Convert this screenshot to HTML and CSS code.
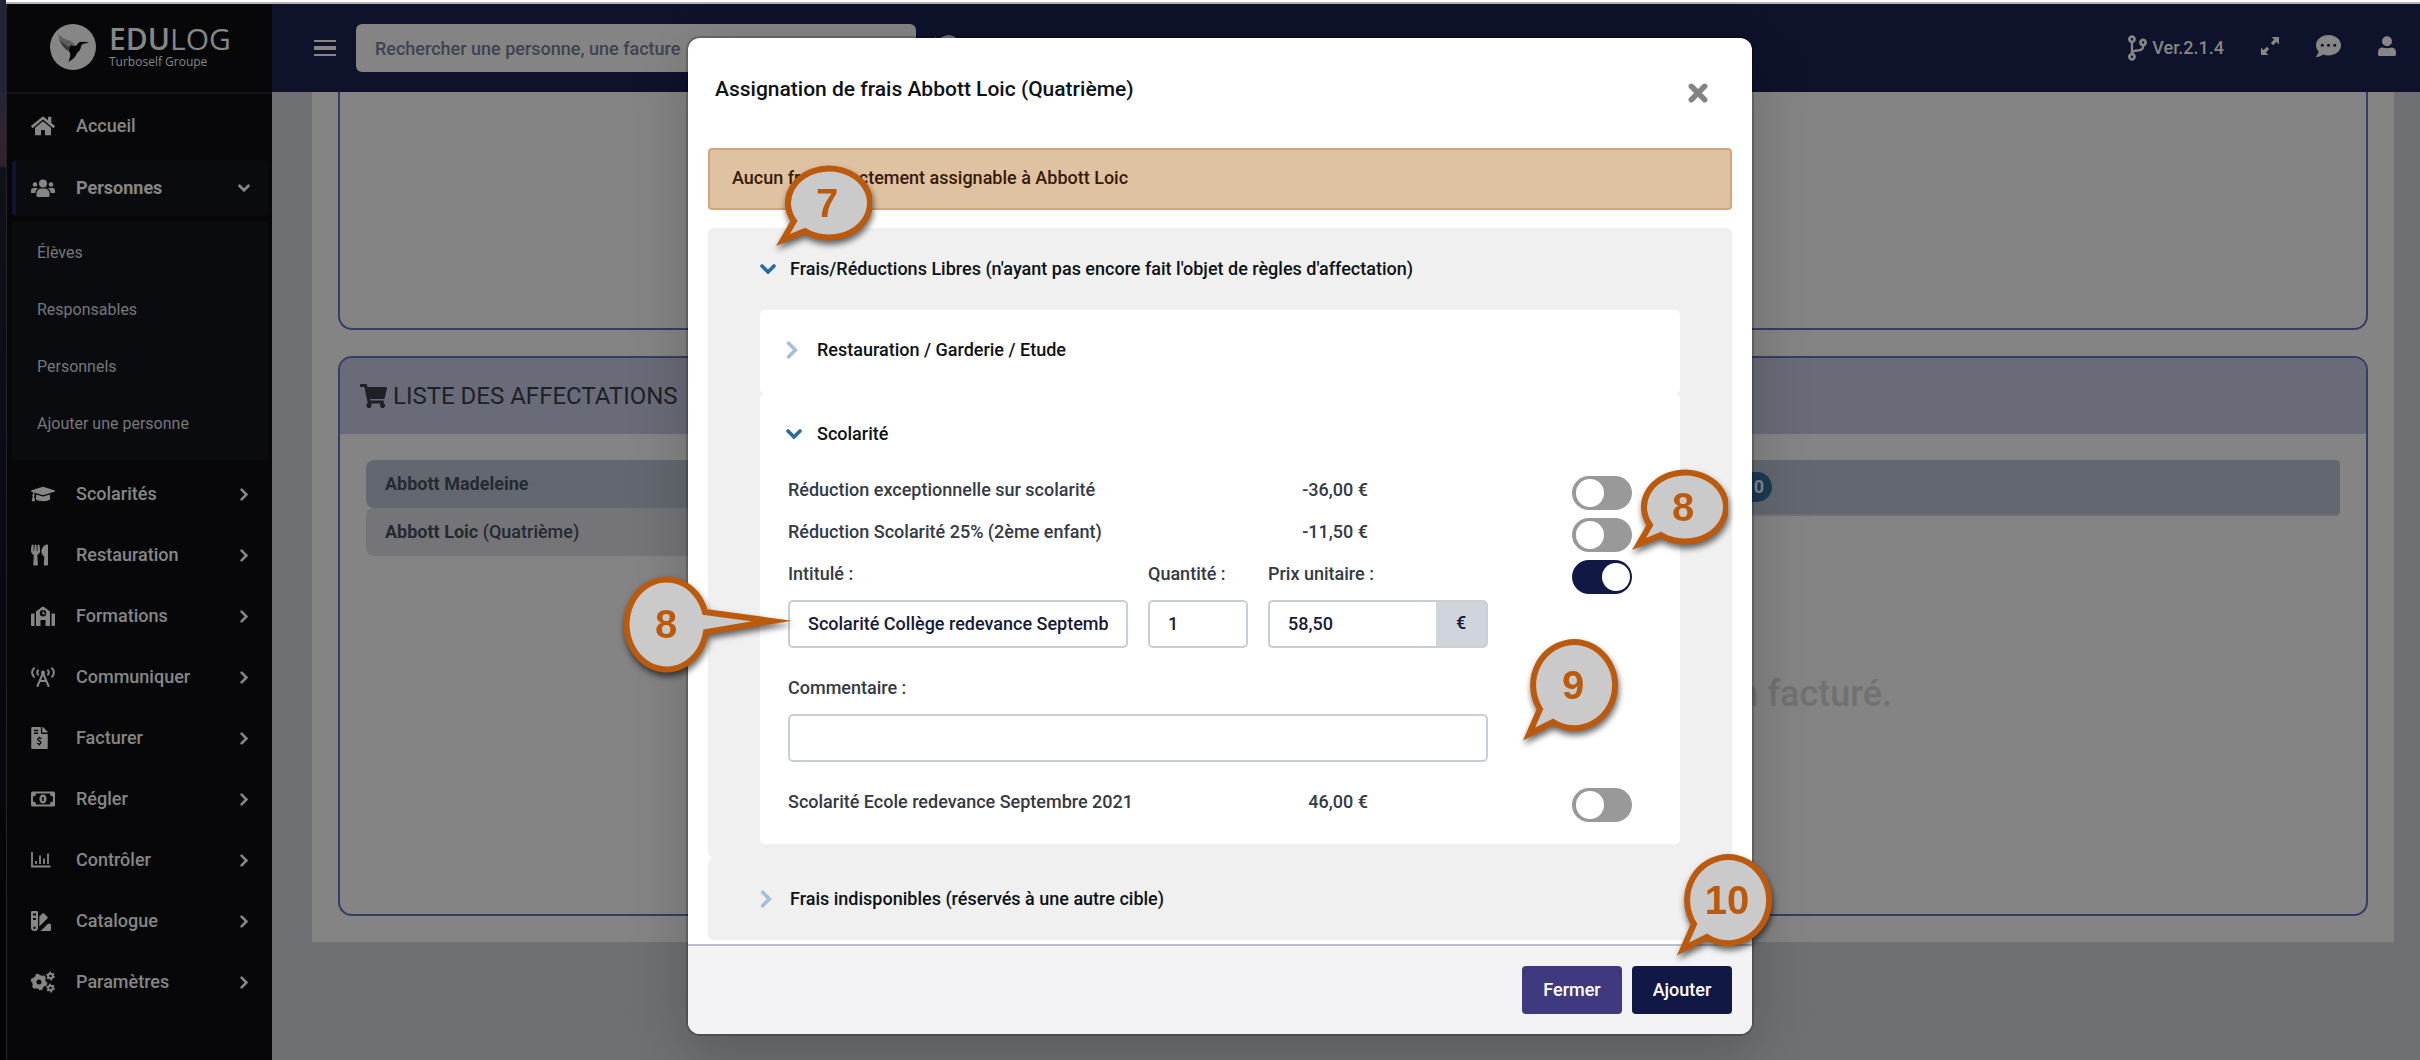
FILE: index.html
```html
<!DOCTYPE html>
<html lang="fr">
<head>
<meta charset="utf-8">
<title>Edulog – Assignation de frais</title>
<link rel="stylesheet" href="styles.css">
</head>
<body>
<svg class="sprite" aria-hidden="true">
  <symbol id="i-home" viewBox="0 0 576 512"><path d="M280.37 148.26L96 300.11V464a16 16 0 0 0 16 16l112.06-.29a16 16 0 0 0 15.92-16V368a16 16 0 0 1 16-16h64a16 16 0 0 1 16 16v95.64a16 16 0 0 0 16 16.05L464 480a16 16 0 0 0 16-16V300L295.67 148.26a12.19 12.19 0 0 0-15.3 0zM571.6 251.47L488 182.56V44.05a12 12 0 0 0-12-12h-56a12 12 0 0 0-12 12v72.61L318.47 43a48 48 0 0 0-61 0L4.34 251.47a12 12 0 0 0-1.6 16.9l25.5 31A12 12 0 0 0 45.15 301l235.22-193.74a12.19 12.19 0 0 1 15.3 0L530.9 301a12 12 0 0 0 16.9-1.6l25.5-31a12 12 0 0 0-1.7-16.93z"/></symbol>
  <symbol id="i-people" viewBox="0 0 24 20"><circle cx="12" cy="5.500" r="4"/><path d="M5.500 18v-2.500a5 5 0 0 1 5-5h3a5 5 0 0 1 5 5V18q0 1-1 1h-11q-1 0-1-1z"/><circle cx="4" cy="6.500" r="2.300"/><circle cx="20" cy="6.500" r="2.300"/><path d="M0 14.500v-2a2.500 2.500 0 0 1 2.500-2.500h3q.8 0 1.300.4Q4.300 12 4.200 15H.8Q0 15 0 14.500zM24 14.500v-2a2.500 2.500 0 0 0-2.500-2.500h-3q-.8 0-1.300.4 2.500 1.600 2.600 4.600h3.400q.8 0 .8-.5z"/></symbol>
  <symbol id="i-cap" viewBox="0 0 640 512"><path d="M622.34 153.2L343.4 67.5c-15.2-4.670-31.6-4.670-46.790 0L17.660 153.2c-23.540 7.230-23.540 38.360 0 45.590l48.630 14.940c-10.670 13.190-17.230 29.280-17.880 46.9C38.780 266.150 32 276.110 32 288c0 10.780 5.680 19.850 13.860 25.650L20.330 428.530C18.110 438.520 25.710 448 35.940 448h56.110c10.240 0 17.840-9.480 15.620-19.470L82.140 313.650C90.320 307.850 96 298.780 96 288c0-11.570-6.470-21.250-15.660-26.870.76-15.020 8.440-28.3 20.690-36.720L296.6 284.5c9.060 2.780 26.440 6.250 46.790 0l278.950-85.7c23.550-7.240 23.550-38.360 0-45.6zM352.790 315.090c-28.530 8.760-52.840 3.920-65.590 0l-145.020-44.550L128 384c0 35.350 85.960 64 192 64s192-28.650 192-64l-14.180-113.470-145.030 44.560z"/></symbol>
  <symbol id="i-fork" viewBox="0 0 416 512"><path d="M207.9 15.2c.8 4.7 16.1 94.5 16.1 128.8 0 52.3-27.8 89.6-68.9 104.6L168 486.7c.7 13.7-10.2 25.3-24 25.3H80c-13.7 0-24.7-11.5-24-25.3l12.9-238.1C27.7 233.6 0 196.2 0 144 0 109.6 15.3 19.9 16.1 15.2 19.3-5.1 61.4-5.4 64 16.3v141.2c1.3 3.4 15.1 3.2 16 0 1.4-25.3 7.9-139.2 8-141.8 3.3-20.8 44.7-20.8 47.9 0 .2 2.7 6.6 116.5 8 141.8.9 3.2 14.8 3.4 16 0V16.3c2.6-21.6 44.8-21.4 48-1.1zm119.2 285.7l-15 185.1c-1.2 14 9.9 26 23.9 26h56c13.3 0 24-10.7 24-24V24c0-13.2-10.7-24-24-24-82.5 0-221.4 178.5-64.9 300.9z"/></symbol>
  <symbol id="i-school" viewBox="0 0 24 20"><path d="M0 8.500Q0 7.500 1 7.500H3.500V20H1q-1 0-1-1zM24 8.500q0-1-1-1h-2.500V20H23q1 0 1-1z"/><path fill-rule="evenodd" d="M5 20V5.500L11.300.7q.7-.5 1.400 0L19 5.500V20h-4.500v-6h-5v6zM12 4a3.200 3.200 0 1 0 0 6.400A3.200 3.200 0 0 0 12 4zm-.5 1.300h1.200V7h1.300v1.200h-2.500z"/></symbol>
  <symbol id="i-tower" viewBox="0 0 24 20"><g fill="none" stroke="currentColor" stroke-width="2" stroke-linecap="round"><path d="M3 1.200Q-.8 5.500 3 9.800M21 1.200q3.800 4.300 0 8.600M7 3.300Q5.400 5.500 7 7.700M17 3.300q1.600 2.200 0 4.400M12 6L6.500 19M12 6l5.500 13M9 14h6"/></g><circle cx="12" cy="5.500" r="2"/></symbol>
  <symbol id="i-invoice" viewBox="0 0 384 512"><path d="M377 105L279.1 7c-4.500-4.500-10.600-7-17-7H256v128h128v-6.100c0-6.300-2.500-12.400-7-16.900z"/><path fill-rule="evenodd" d="M224 136V0H24C10.700 0 0 10.700 0 24v464c0 13.300 10.700 24 24 24h336c13.300 0 24-10.700 24-24V160H248c-13.200 0-24-10.800-24-24zM64 64h96v32H64zM64 128h96v32H64z"/><path d="M240 275q-20-18-50-16c-50 3-52 50-6 62s56 66 6 72q-34 2-56-18M192 228v30M192 394v34" fill="none" stroke="#070709" stroke-width="30"/></symbol>
  <symbol id="i-money" viewBox="0 0 24 16"><path fill-rule="evenodd" d="M1.500.5h21Q24 .5 24 2v12q0 1.500-1.500 1.500h-21Q0 15.500 0 14V2Q0 .5 1.500.5zM5 2.500A3 3 0 0 1 2 5.500v5a3 3 0 0 1 3 3h14a3 3 0 0 1 3-3v-5a3 3 0 0 1-3-3z"/><path fill-rule="evenodd" d="M12 3.500c-2 0-3.600 2-3.600 4.500s1.600 4.500 3.600 4.500 3.600-2 3.600-4.500S14 3.500 12 3.500zM11 6h1.700v4h-1.600V7.200H10.700z"/></symbol>
  <symbol id="i-chart" viewBox="0 0 20 16"><path d="M1 0v14.500h18.500M5 12V9M9 12V3.500M13 12V6.500M17 12V1.500" fill="none" stroke="currentColor" stroke-width="1.800"/></symbol>
  <symbol id="i-swatch" viewBox="0 0 20 20"><path fill-rule="evenodd" d="M1.200 0h4.600Q7 0 7 1.200V16.500a3.500 3.500 0 0 1-7 0V1.200Q0 0 1.200 0zM2 2.500v2h3v-2zM2 7v2h3V7zM3.500 15.500a1.200 1.200 0 1 0 0 2.400 1.200 1.200 0 0 0 0-2.400z"/><path d="M8.300 5.600L11.500 2.500q.8-.8 1.600 0l3.300 3.300q.8.800 0 1.600L8.300 15.500zM17 12.800h1.800q1.200 0 1.200 1.200v4.800q0 1.200-1.200 1.200H9.500z"/></symbol>
  <symbol id="i-gears" viewBox="0 0 24 22"><g fill="none" stroke="currentColor"><circle cx="8" cy="11" r="4.700" stroke-width="4.400"/><circle cx="8" cy="11" r="7.300" stroke-width="2" stroke-dasharray="3.820 3.820"/><circle cx="19.500" cy="5" r="2.300" stroke-width="2"/><circle cx="19.500" cy="5" r="3.700" stroke-width="1.400" stroke-dasharray="1.940 1.940"/><circle cx="19.500" cy="17" r="2.300" stroke-width="2"/><circle cx="19.500" cy="17" r="3.700" stroke-width="1.400" stroke-dasharray="1.940 1.940"/></g></symbol>
  <symbol id="i-cart" viewBox="0 0 576 512"><path d="M528.120 301.319l47.273-208C578.806 78.301 567.391 64 551.990 64H159.208l-9.166-44.810C147.758 8.021 137.930 0 126.529 0H24C10.745 0 0 10.745 0 24v16c0 13.255 10.745 24 24 24h69.883l70.248 343.435C147.325 417.1 136 435.222 136 456c0 30.928 25.072 56 56 56s56-25.072 56-56c0-15.674-6.447-29.835-16.824-40h209.647C430.447 426.165 424 440.326 424 456c0 30.928 25.072 56 56 56s56-25.072 56-56c0-22.172-12.888-41.332-31.579-50.405l5.517-24.276c3.413-15.018-8.002-29.319-23.403-29.319H218.117l-6.545-32h293.145c11.206 0 20.920-7.754 23.403-18.681z"/></symbol>
  <symbol id="i-branch" viewBox="0 0 384 512"><path fill-rule="evenodd" d="M384 144c0-44.200-35.800-80-80-80s-80 35.800-80 80c0 36.400 24.300 67.100 57.500 76.800-.6 16.100-4.200 28.500-11 36.900-15.400 19.200-49.300 22.400-85.200 25.700-28.200 2.600-57.400 5.400-81.300 16.900v-144c32.500-10.200 56-40.500 56-76.300 0-44.200-35.800-80-80-80S0 35.800 0 80c0 35.800 23.500 66.100 56 76.300v199.300C23.500 365.900 0 396.200 0 432c0 44.200 35.800 80 80 80s80-35.800 80-80c0-34-21.200-63.100-51.200-74.600 3.100-5.200 7.800-9.800 14.900-13.400 16.200-8.200 40.400-10.400 66.100-12.800 42.200-3.900 90-8.400 118.200-43.400 14-17.400 21.100-39.800 21.600-67.900 31.600-10.800 54.400-40.700 54.400-75.900zM80 56a24 24 0 1 1 0 48 24 24 0 0 1 0-48zM80 408a24 24 0 1 1 0 48 24 24 0 0 1 0-48zM304 120a24 24 0 1 1 0 48 24 24 0 0 1 0-48z"/></symbol>
  <symbol id="i-expand" viewBox="0 0 18 18"><path d="M10.500 0H18v7.500l-2.600-2.600-3.300 3.300-2.300-2.300 3.300-3.300zM7.500 18H0v-7.500l2.600 2.600 3.300-3.300 2.300 2.300-3.300 3.300z"/></symbol>
  <symbol id="i-comment" viewBox="0 0 512 512"><path fill-rule="evenodd" d="M256 32C114.600 32 0 125.100 0 240c0 49.600 21.400 95 57 130.700C44.500 421.100 2.700 466 2.200 466.500c-2.200 2.300-2.800 5.700-1.500 8.700S4.800 480 8 480c66.300 0 116-31.800 140.600-51.400 32.700 12.300 69 19.400 107.400 19.400 141.400 0 256-93.100 256-208S397.400 32 256 32zM128 208a32 32 0 1 1 0 64 32 32 0 0 1 0-64zM256 208a32 32 0 1 1 0 64 32 32 0 0 1 0-64zM384 208a32 32 0 1 1 0 64 32 32 0 0 1 0-64z"/></symbol>
  <symbol id="i-user" viewBox="0 0 18 20"><circle cx="9" cy="5.200" r="5"/><path d="M0 18.500V16a4.500 4.500 0 0 1 4.500-4.500q4.500 1.400 9 0A4.500 4.500 0 0 1 18 16v2.500q0 1.500-1.500 1.500h-15Q0 20 0 18.500z"/></symbol>
  <symbol id="i-history" viewBox="0 0 22 22"><path d="M3 6.500A9.500 9.500 0 1 1 2 13M11 6v5.500l4 2.500" fill="none" stroke="currentColor" stroke-width="2.600"/><path d="M0 1.500v7.500h7.500z"/></symbol>
  <symbol id="i-right" viewBox="0 0 10 16"><path d="M2 2l6 6-6 6" fill="none" stroke="currentColor" stroke-width="3.200" stroke-linecap="round"/></symbol>
  <symbol id="i-down" viewBox="0 0 16 10"><path d="M2 2l6 6 6-6" fill="none" stroke="currentColor" stroke-width="3.600" stroke-linecap="round"/></symbol>
  <symbol id="i-close" viewBox="0 0 18 18"><path d="M3 3l12 12M15 3L3 15" fill="none" stroke="currentColor" stroke-width="5" stroke-linecap="round"/></symbol>
  <symbol id="i-wide" viewBox="0 0 100 92"><path d="M22 61A41 34.500 0 1 1 33 71L11 80z"/></symbol>
  <symbol id="i-tall" viewBox="0 0 100 108"><path d="M20 73A41 43 0 1 1 33 86L9 98z"/></symbol>
  <symbol id="i-side" viewBox="0 0 170 104"><path d="M83 39A40 45 0 1 0 84 59L150 48z"/></symbol>
</svg>

<div class="screen">
  <div class="chrome"></div>
  <div class="app">
    <aside class="sidebar">
      <a class="brand" href="#">
        <svg class="brand-mark" viewBox="0 0 46 46" aria-hidden="true"><circle cx="23" cy="23" r="23" fill="#868686"/><path d="M8 10q5 5 13 7l4 4-3 6q-6-1-9-6-4-5-5-11z" fill="#5f5f60"/><path d="M9 15q6 7 13 8l3 1-4 4q-8-2-12-13z" fill="#3a3a3b"/><path d="M39 19q-4-2-6-1-4-1-6 3-2 2-6 0-3 6-1 8 1 4-2 9 7-3 9-9 4-3 4-7 1-3 8-3z" fill="#070709"/></svg>
        <span class="brand-text"><span class="brand-name"><b>EDU</b>LOG</span><span class="brand-sub">Turboself Groupe</span></span>
      </a>
      <nav class="nav">
        <a class="nav-item" href="#"><svg><use href="#i-home"/></svg><span>Accueil</span></a>
        <a class="nav-item active" href="#"><svg><use href="#i-people"/></svg><span>Personnes</span><svg class="chev-down"><use href="#i-down"/></svg></a>
        <div class="subnav">
          <a href="#">Élèves</a><a href="#">Responsables</a><a href="#">Personnels</a><a href="#">Ajouter une personne</a>
        </div>
        <div class="nav-rest">
          <a class="nav-item" href="#"><svg><use href="#i-cap"/></svg><span>Scolarités</span><svg class="chev"><use href="#i-right"/></svg></a>
          <a class="nav-item" href="#"><svg class="slim"><use href="#i-fork"/></svg><span>Restauration</span><svg class="chev"><use href="#i-right"/></svg></a>
          <a class="nav-item" href="#"><svg><use href="#i-school"/></svg><span>Formations</span><svg class="chev"><use href="#i-right"/></svg></a>
          <a class="nav-item" href="#"><svg><use href="#i-tower"/></svg><span>Communiquer</span><svg class="chev"><use href="#i-right"/></svg></a>
          <a class="nav-item" href="#"><svg class="slim"><use href="#i-invoice"/></svg><span>Facturer</span><svg class="chev"><use href="#i-right"/></svg></a>
          <a class="nav-item" href="#"><svg><use href="#i-money"/></svg><span>Régler</span><svg class="chev"><use href="#i-right"/></svg></a>
          <a class="nav-item" href="#"><svg class="narrow"><use href="#i-chart"/></svg><span>Contrôler</span><svg class="chev"><use href="#i-right"/></svg></a>
          <a class="nav-item" href="#"><svg class="narrow"><use href="#i-swatch"/></svg><span>Catalogue</span><svg class="chev"><use href="#i-right"/></svg></a>
          <a class="nav-item" href="#"><svg><use href="#i-gears"/></svg><span>Paramètres</span><svg class="chev"><use href="#i-right"/></svg></a>
        </div>
      </nav>
    </aside>

    <div class="main">
      <header class="topbar">
        <button class="burger" type="button" aria-label="Menu"><i></i><i></i><i></i></button>
        <input class="search" type="search" aria-label="Rechercher" placeholder="Rechercher une personne, une facture">
        <svg class="history"><use href="#i-history"/></svg>
        <div class="tools">
          <span class="version"><svg><use href="#i-branch"/></svg>Ver.2.1.4</span>
          <a href="#" aria-label="Plein écran"><svg class="t-expand"><use href="#i-expand"/></svg></a>
          <a href="#" aria-label="Messages"><svg class="t-comment"><use href="#i-comment"/></svg></a>
          <a href="#" aria-label="Compte"><svg class="t-user"><use href="#i-user"/></svg></a>
        </div>
      </header>
      <main class="page">
        <div class="panel panel-top"></div>
        <section class="panel panel-list">
          <h2><svg><use href="#i-cart"/></svg>LISTE DES AFFECTATIONS</h2>
          <div class="columns">
            <ul class="people">
              <li class="current"><b>Abbott Madeleine</b></li>
              <li><b>Abbott Loic</b> (Quatrième)</li>
            </ul>
            <div class="bills">
              <div class="bills-bar"><span class="count">0</span></div>
              <p class="empty">Non facturé.</p>
            </div>
          </div>
        </section>
      </main>
    </div>
  </div>
</div>

<div class="overlay">
  <div class="modal" role="dialog" aria-labelledby="dlg-title">
    <div class="modal-head">
      <h1 id="dlg-title">Assignation de frais Abbott Loic (Quatrième)</h1>
      <button class="close" type="button" aria-label="Fermer la fenêtre"><svg><use href="#i-close"/></svg></button>
    </div>
    <div class="modal-body">
      <p class="alert">Aucun frais directement assignable à Abbott Loic</p>
      <section class="group">
        <button class="group-head" type="button"><span class="ico"><svg class="down"><use href="#i-down"/></svg></span>Frais/Réductions Libres (n'ayant pas encore fait l'objet de règles d'affectation)</button>
        <div class="group-body">
          <section class="sub">
            <button class="sub-head" type="button"><span class="ico"><svg class="right"><use href="#i-right"/></svg></span>Restauration / Garderie / Etude</button>
          </section>
          <section class="sub">
            <button class="sub-head" type="button"><span class="ico"><svg class="down"><use href="#i-down"/></svg></span>Scolarité</button>
            <div class="fees">
              <div class="fee"><label class="fee-text" for="f1"><span>Réduction exceptionnelle sur scolarité</span><span>-36,00 €</span></label><input class="switch" type="checkbox" id="f1"></div>
              <div class="fee"><label class="fee-text" for="f2"><span>Réduction Scolarité 25% (2ème enfant)</span><span>-11,50 €</span></label><input class="switch" type="checkbox" id="f2"></div>
              <div class="fee open">
                <div class="fee-form">
                  <div class="field"><label for="name">Intitulé :</label><input class="box" id="name" type="text" value="Scolarité Collège redevance Septembre 2021"></div>
                  <div class="field"><label for="qty">Quantité :</label><input class="box" id="qty" type="text" value="1"></div>
                  <div class="field"><label for="price">Prix unitaire :</label><div class="price"><input class="box" id="price" type="text" value="58,50"><span>€</span></div></div>
                  <div class="field full"><label for="note">Commentaire :</label><input class="box" id="note" type="text"></div>
                </div>
                <input class="switch" type="checkbox" checked aria-label="Scolarité Collège redevance Septembre 2021">
              </div>
              <div class="fee"><label class="fee-text" for="f4"><span>Scolarité Ecole redevance Septembre 2021</span><span>46,00 €</span></label><input class="switch" type="checkbox" id="f4"></div>
            </div>
          </section>
        </div>
      </section>
      <section class="group closed">
        <button class="group-head" type="button"><span class="ico"><svg class="right"><use href="#i-right"/></svg></span>Frais indisponibles (réservés à une autre cible)</button>
      </section>
    </div>
    <div class="modal-foot">
      <button class="btn" type="button">Fermer</button>
      <button class="btn primary" type="button">Ajouter</button>
    </div>

    <svg class="callout wide c7"><use href="#i-wide"/><text x="55" y="57">7</text></svg>
    <svg class="callout wide c8"><use href="#i-wide"/><text x="55" y="57">8</text></svg>
    <svg class="callout side c8b"><use href="#i-side"/><text x="44" y="65">8</text></svg>
    <svg class="callout tall c9"><use href="#i-tall"/><text x="53" y="63">9</text></svg>
    <svg class="callout tall c10"><use href="#i-tall"/><text x="53" y="63">10</text></svg>
  </div>
</div>
</body>
</html>
```

FILE: styles.css
```css
* { box-sizing: border-box; }
body {
  margin: 0;
  font: 500 18px/24px Roboto, "Liberation Sans", sans-serif;
  color: #343a46;
  background: #050508;
}
a { color: inherit; text-decoration: none; }
button, input { font: inherit; color: inherit; }
button { border: 0; background: none; padding: 0; text-align: left; }
svg { fill: currentColor; display: block; }
h1, h2, p, ul { margin: 0; padding: 0; }
.sprite { position: absolute; width: 0; height: 0; }

/* window frame */
.screen {
  min-height: 100vh;
  padding-left: 6px;
  display: flex;
  flex-direction: column;
  background: linear-gradient(#232338, #232338 90px, #32242f 140px, #30212d 166px, #11111c 168px, #0a0a16 500px, #040407 900px);
}
.chrome { height: 4px; background: #fff; border-bottom: 2px solid #b3b3b3; }
.app { flex: 1; display: grid; grid-template-columns: 266px minmax(0, 1fr); }

/* sidebar */
.sidebar { background: #070709; border-left: 1px solid #252527; color: #868686; }
.brand { display: flex; align-items: center; gap: 13px; height: 90px; padding: 0 0 2px 43px; border-bottom: 2px solid #131316; }
.brand-mark { width: 46px; height: 46px; }
.brand-text { display: flex; flex-direction: column; font-family: "Open Sans", sans-serif; font-weight: 400; }
.brand-name { font-size: 30px; line-height: 30px; }
.brand-name b { font-weight: 600; }
.brand-sub { font-size: 12px; line-height: 16px; }
.nav { display: flex; flex-direction: column; gap: 6px; padding: 4px 4px 0 5px; }
.nav-item { display: grid; grid-template-columns: 24px 1fr 14px; column-gap: 21px; align-items: center; height: 56px; padding: 0 17px 0 19px; }
.nav-item svg { width: 24px; height: 22px; }
.nav-item svg.narrow { width: 20px; }
.nav-item svg.slim { width: 17px; }
.nav-item .chev { width: 8px; height: 13px; justify-self: center; }
.nav-item .chev-down { width: 12px; height: 8px; justify-self: center; }
.active { background: #0a0b0f; border-left: 4px solid #0f1433; border-radius: 4px; padding-left: 15px; font-weight: 700; }
.subnav { display: flex; flex-direction: column; background: #0a0b0f; border-radius: 4px; padding: 2px 0 8px; font-size: 16px; font-weight: 400; color: #77777a; }
.subnav a { line-height: 57px; padding-left: 25px; }
.nav-rest { display: flex; flex-direction: column; gap: 5px; }

/* top bar */
.main { background: #6f7074; }
.topbar { display: flex; align-items: center; height: 88px; padding: 0 24px 0 42px; background: #0e122b; color: #868686; }
.burger { display: flex; flex-direction: column; gap: 5px; width: 22px; margin-right: 20px; }
.burger i { height: 2px; background: #868686; }
.burger i:nth-child(2) { height: 4px; margin: -1px 0; }
.search { width: 560px; height: 48px; border: 0; border-radius: 6px; background: #848484; padding: 0 19px; }
.search::placeholder { color: #3f4350; opacity: 1; }
.history { width: 26px; height: 28px; margin-left: 19px; }
.tools { margin-left: auto; display: flex; align-items: center; gap: 37px; }
.tools a { padding-bottom: 4px; }
.version { display: flex; align-items: center; gap: 5px; }
.version svg { width: 19px; height: 26px; }
.t-expand { width: 18px; height: 18px; }
.t-comment { width: 25px; height: 26px; }
.t-user { width: 18px; height: 20px; }

/* page behind the dialog */
.page { background: #848484; margin: 0 26px 0 40px; padding: 0 26px 26px; }
.panel { border: 2px solid #363d63; border-radius: 14px; }
.panel-top { height: 238px; border-top: 0; border-radius: 0 0 14px 14px; margin-bottom: 26px; }
.panel-list { min-height: 560px; overflow: hidden; }
.panel h2 { display: flex; align-items: center; gap: 6px; height: 76px; padding-left: 20px; background: #696b78; color: #1d2126; font-size: 24px; font-weight: 400; }
.panel h2 svg { width: 27px; height: 24px; }
.columns { display: grid; grid-template-columns: 1fr 3fr; gap: 28px; padding: 26px; }
.people { list-style: none; color: #252a30; }
.people li { line-height: 48px; padding-left: 19px; border-radius: 8px; background: #747479; }
.people .current { background: #636870; }
.bills-bar { display: flex; justify-content: flex-end; align-items: center; height: 56px; padding-right: 568px; background: #636870; border-radius: 4px; border-bottom: 2px solid #6f7176; }
.count { width: 40px; line-height: 30px; border-radius: 15px; background: #1e3a56; color: #868686; text-align: right; padding-right: 8px; font-weight: 700; }
.empty { margin-top: 156px; padding-right: 448px; text-align: right; font-size: 36px; line-height: 44px; color: #717171; }

/* dialog */
.overlay { position: absolute; inset: 0; padding: 38px 0 26px 20px; display: flex; justify-content: center; align-items: flex-start; }
.modal { position: relative; width: 1064px; max-width: 100%; background: #fff; border-radius: 12px; box-shadow: 0 0 0 2px rgba(0, 0, 0, .2), 0 20px 60px rgba(0, 0, 0, .2); }
.modal-head { display: flex; justify-content: space-between; align-items: flex-start; padding: 40px 39px 40px 27px; }
.modal-head h1 { font-size: 21px; line-height: 22px; font-weight: 500; color: #0d1216; }
.close { display: grid; place-items: center; width: 30px; height: 30px; color: #848484; }
.close svg { width: 20px; height: 20px; }
.modal-body { padding: 0 20px 4px; }
.alert { padding: 16px 22px 18px; margin-bottom: 18px; background: #dfc2a2; border: 2px solid #d5a677; border-radius: 4px; color: #37190a; }
.group { background: #f0f0f0; border-radius: 6px; padding: 0 52px 14px; }
.group.closed { padding-bottom: 0; }
.group-head, .sub-head { display: flex; align-items: center; width: 100%; color: #0d1216; }
.group-head { height: 82px; gap: 13px; }
.sub-head { height: 80px; gap: 14px; }
.ico { width: 17px; display: flex; justify-content: flex-start; }
.down { width: 16px; height: 10px; color: #2b6aa3; }
.right { width: 12px; height: 18px; color: #a6bfd6; }
.sub { background: #fff; border-radius: 5px; padding: 0 48px 4px 26px; }
.sub + .sub { padding-bottom: 18px; }
.fees { padding-left: 2px; margin-top: -2px; }
.fee { display: grid; grid-template-columns: minmax(0, 700px) 60px; justify-content: space-between; align-items: center; min-height: 42px; }
.fee-text { display: flex; justify-content: space-between; padding: 0 120px 6px 0; }
.open { align-items: start; margin-bottom: 22px; }
.open .switch { margin-top: 4px; }
.fee-form { display: grid; grid-template-columns: 340fr 100fr 220fr; gap: 26px 20px; padding-top: 4px; }
.field { display: flex; flex-direction: column; gap: 12px; min-width: 0; }
.field label { line-height: 28px; }
.full { grid-column: 1 / -1; }
.box { width: 100%; min-width: 0; height: 48px; padding: 0 18px 2px; border: 2px solid #c9d0d5; border-radius: 5px; background: #fff; color: #171a38; }
.price { display: flex; }
.price .box { border-right: 0; border-radius: 5px 0 0 5px; }
.price span { flex: 0 0 52px; border: 2px solid #c9d0d5; border-left: 0; border-radius: 0 5px 5px 0; background: #d0d4dd; line-height: 42px; text-align: center; color: #171a38; }
.switch { appearance: none; position: relative; width: 60px; height: 34px; margin: 0; border-radius: 17px; background: #999; }
.switch::before { content: ""; position: absolute; left: 4px; top: 3px; width: 28px; height: 28px; border-radius: 50%; background: #fff; }
.switch:checked { background: #111846; }
.switch:checked::before { left: 30px; }
.modal-foot { display: flex; justify-content: flex-end; gap: 10px; padding: 20px; border-top: 2px solid #bbc0c6; border-radius: 0 0 12px 12px; background: #f3f3f5; }
.btn { width: 100px; height: 48px; border-radius: 4px; background: #3f3a80; color: #fff; text-align: center; }
.primary { background: #111846; }

/* numbered callouts pinned over the dialog */
.callout { position: absolute; overflow: visible; fill: #cacaca; stroke: #bb5a0c; stroke-width: 6; stroke-miterlimit: 12; filter: drop-shadow(1px 4px 3px rgba(0, 0, 0, .6)); pointer-events: none; }
.callout text { font: 700 40px "Liberation Sans", sans-serif; text-anchor: middle; fill: #bb5a0c; stroke: none; }
.wide { width: 100px; height: 92px; }
.tall { width: 100px; height: 108px; }
.side { width: 170px; height: 104px; }
.c7 { left: 84px; top: 122px; }
.c8 { left: 940px; top: 426px; }
.c8b { left: -66px; top: 535px; }
.c9 { left: 832px; top: 598px; }
.c10 { left: 986px; top: 813px; }
```
